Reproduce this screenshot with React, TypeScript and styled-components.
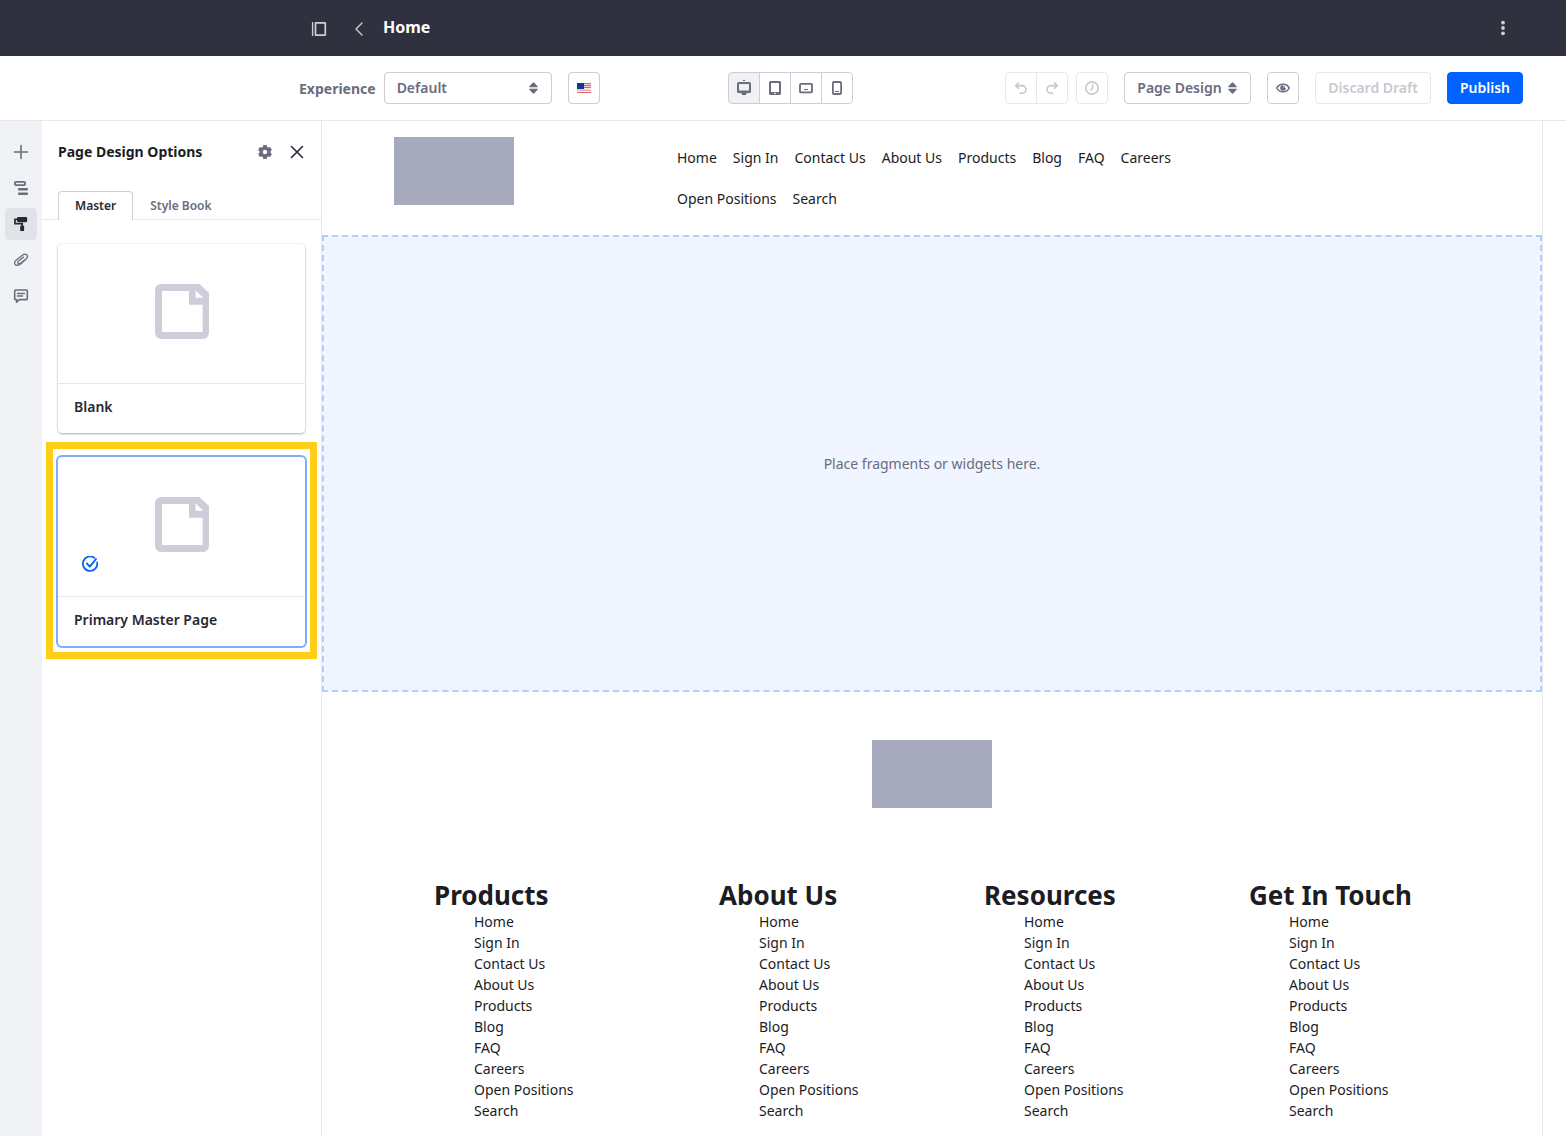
import React from "react";
import styled, { createGlobalStyle, css } from "styled-components";

const color = {
  navy: "#30313f",
  text: "#1c1c24",
  title: "#272833",
  muted: "#6b6c7e",
  border: "#cdced9",
  line: "#e7e7ed",
  rail: "#f1f2f5",
  primary: "#0062ff",
  soft: "#80acff",
  block: "#a7a9bc",
};

const GlobalStyle = createGlobalStyle`
  *, *::before, *::after { box-sizing: border-box; }
  body {
    margin: 0;
    background: #fff;
    color: ${color.text};
    font-family: "Noto Sans", "Liberation Sans", sans-serif;
    font-size: 14px;
    line-height: 21px;
  }
  button, select { font: inherit; color: inherit; }
  h1, h2, ul { margin: 0; padding: 0; }
  ul { list-style: none; }
  a { color: inherit; text-decoration: none; }
  svg { display: block; flex: none; }
`;

const Page = styled.div`
  display: flex;
  flex-direction: column;
  min-height: 100vh;
`;

/* Top bar */

const TopBar = styled.header`
  display: flex;
  align-items: center;
  height: 56px;
  padding: 0 47px 0 303px;
  background: ${color.navy};
  color: #fff;
`;

const TopNav = styled.div`
  display: flex;
  gap: 8px;
  padding-top: 2px;
`;

const BarButton = styled.button`
  display: flex;
  align-items: center;
  justify-content: center;
  width: 32px;
  height: 32px;
  padding: 0;
  border: 0;
  background: none;
  color: ${color.border};
  cursor: pointer;
`;

const PageTitle = styled.h1`
  flex: 1;
  margin-left: 8px;
  padding-bottom: 2px;
  font-size: 16px;
  line-height: 24px;
  font-weight: 700;
`;

/* Toolbar */

const Toolbar = styled.div`
  display: flex;
  align-items: center;
  height: 65px;
  padding: 0 43px 0 299px;
  border-bottom: 1px solid ${color.line};
  color: ${color.muted};
  font-weight: 600;
`;

const ToolGroup = styled.div<{ $push?: boolean }>`
  display: flex;
  align-items: center;
  gap: 16px;
  ${(p) => p.$push && "margin-left: auto;"}
`;

const ExperienceField = styled.div`
  display: flex;
  align-items: center;
  gap: 8px;

  label {
    font-weight: 700;
  }
`;

const SelectBox = styled.div<{ $wide?: boolean }>`
  position: relative;
  width: ${(p) => (p.$wide ? "168px" : "127px")};

  svg {
    position: absolute;
    top: 10px;
    right: 14px;
    pointer-events: none;
  }
`;

const control = css`
  height: 32px;
  border: 1px solid ${color.border};
  border-radius: 4px;
  background: #fff;
  color: ${color.muted};
  font-weight: 600;
  cursor: pointer;
`;

const Select = styled.select`
  ${control}
  display: block;
  width: 100%;
  padding: 0 12px 2px;
  appearance: none;
`;

const ToolButton = styled.button<{ $primary?: boolean }>`
  ${control}
  display: flex;
  align-items: center;
  justify-content: center;
  padding: 0 12px 2px;

  &:disabled {
    border-color: ${color.line};
    color: #c8c8d0;
    cursor: default;
  }

  ${(p) =>
    p.$primary &&
    css`
      border-color: ${color.primary};
      background: ${color.primary};
      color: #fff;
    `}
`;

const IconButton = styled(ToolButton)<{ $active?: boolean }>`
  width: 32px;
  padding: 0;
  ${(p) => p.$active && `background: ${color.rail};`}
`;

const ButtonGroup = styled.div`
  display: flex;

  > button:not(:first-child) {
    margin-left: -1px;
    border-top-left-radius: 0;
    border-bottom-left-radius: 0;
  }
  > button:not(:last-child) {
    border-top-right-radius: 0;
    border-bottom-right-radius: 0;
  }
`;

const DeviceGroup = styled(ButtonGroup)`
  margin-left: 128px;
`;

const HistoryGroup = styled.div`
  display: flex;
  gap: 8px;
`;

/* Work area */

const Workspace = styled.div`
  display: flex;
  flex: 1;
`;

const Rail = styled.nav`
  display: flex;
  flex-direction: column;
  align-items: center;
  gap: 4px;
  flex: none;
  width: 42px;
  padding-top: 15px;
  background: ${color.rail};
`;

const RailButton = styled.button<{ $active?: boolean }>`
  display: flex;
  align-items: center;
  justify-content: center;
  width: 32px;
  height: 32px;
  padding: 0;
  border: 0;
  border-radius: 4px;
  background: ${(p) => (p.$active ? "#e2e3e8" : "none")};
  color: ${(p) => (p.$active ? color.title : color.muted)};
  cursor: pointer;
`;

const Panel = styled.aside`
  flex: none;
  width: 280px;
  border-right: 1px solid ${color.line};
`;

const PanelHeader = styled.div`
  display: flex;
  align-items: center;
  height: 62px;
  padding: 0 8px 0 16px;
`;

const PanelTitle = styled.h2`
  flex: 1;
  padding-bottom: 2px;
  font-size: 14px;
  line-height: 21px;
  font-weight: 700;
`;

const PanelButton = styled(BarButton)<{ $dark?: boolean }>`
  color: ${(p) => (p.$dark ? color.title : color.muted)};
`;

const Tabs = styled.div`
  display: flex;
  height: 37px;
  padding: 8px 16px 0;
  border-bottom: 1px solid ${color.line};
`;

const Tab = styled.button<{ $active?: boolean }>`
  height: 29px;
  padding: 0 16px;
  border: 1px solid ${(p) => (p.$active ? color.border : "transparent")};
  border-bottom: 0;
  border-radius: 4px 4px 0 0;
  background: ${(p) => (p.$active ? "#fff" : "none")};
  color: ${(p) => (p.$active ? color.title : color.muted)};
  font-size: 12px;
  line-height: 18px;
  font-weight: 600;
  cursor: pointer;
`;

const CardList = styled.div`
  display: flex;
  flex-direction: column;
  gap: 24px;
  padding: 24px 16px;
`;

const Card = styled.button<{ $selected?: boolean }>`
  position: relative;
  display: flex;
  flex-direction: column;
  width: 100%;
  padding: 0;
  border: 0;
  border-radius: 4px;
  background: #fff;
  color: ${color.title};
  text-align: left;
  cursor: pointer;
  box-shadow: ${(p) =>
    p.$selected
      ? `0 0 0 2px ${color.soft}`
      : "0 1px 3px -1px rgba(0, 0, 0, 0.6), 0 0 2px rgba(0, 0, 0, 0.14)"};

  ${(p) =>
    p.$selected &&
    css`
      &::after {
        content: "";
        position: absolute;
        inset: -15px -12px -13px -12px;
        border: 7px solid #ffcf17;
        pointer-events: none;
      }
    `}
`;

const CardPreview = styled.span`
  display: flex;
  align-items: center;
  justify-content: center;
  width: 100%;
  height: 140px;
  padding-bottom: 4px;
  border-bottom: 1px solid ${color.line};
  color: ${color.border};
`;

const CardCheck = styled.span`
  position: absolute;
  top: 99px;
  left: 24px;
  color: ${color.primary};
`;

const CardLabel = styled.span`
  padding: 12px 16px 16px;
  font-weight: 600;
`;

/* Canvas */

const Canvas = styled.main`
  flex: 1;
  min-width: 0;
  margin-right: 23px;
  border-right: 1px solid ${color.line};
`;

const SiteHeader = styled.div`
  display: grid;
  grid-template-columns: 283px minmax(0, 560px);
  align-items: start;
  max-width: 1140px;
  margin: 0 auto;
  padding: 16px 32px;
`;

const LogoBlock = styled.div`
  width: 120px;
  height: 68px;
  background: ${color.block};
`;

const SiteNav = styled.ul`
  display: flex;
  flex-wrap: wrap;
  column-gap: 16px;

  a {
    display: block;
    padding: 10px 0;
  }
`;

const DropZone = styled.div`
  display: flex;
  align-items: center;
  justify-content: center;
  height: 457px;
  border: 2px dashed #b3cdff;
  background: #f0f5ff;
  color: ${color.muted};
`;

const SiteFooter = styled.footer`
  display: flex;
  flex-direction: column;
  align-items: center;
  gap: 72px;
  padding-top: 48px;
`;

const FooterColumns = styled.div`
  display: grid;
  grid-template-columns: repeat(4, 1fr);
  width: 100%;
  max-width: 1140px;
`;

const FooterColumn = styled.section<{ $indent: number }>`
  padding-left: ${(p) => p.$indent}px;

  h2 {
    font-size: 26px;
    line-height: 31px;
    font-weight: 700;
  }
  ul {
    padding-left: 40px;
  }
`;

/* Icons */

const stroke = (width: number) => ({
  fill: "none",
  stroke: "currentColor",
  strokeWidth: width,
  strokeLinecap: "round" as const,
  strokeLinejoin: "round" as const,
});

const Icon = ({ children }: { children: React.ReactNode }) => (
  <svg width="16" height="16" viewBox="0 0 16 16" fill="currentColor" aria-hidden="true">
    {children}
  </svg>
);

const CaretDouble = () => (
  <svg width="9" height="12" viewBox="0 0 9 12" fill="currentColor" aria-hidden="true">
    <path d="M4 .4a.7.7 0 0 1 1 0l3.600 3.800c.4.4.1 1-.4 1H.8c-.5 0-.8-.6-.4-1zM4 11.600a.7.7 0 0 0 1 0l3.600-3.800c.4-.4.1-1-.4-1H.8c-.5 0-.8.6-.4 1z" />
  </svg>
);

const PageGlyph = () => (
  <svg width="54" height="55" viewBox="0 0 54 55" fill="currentColor" aria-hidden="true">
    <path
      fillRule="evenodd"
      d="M6 0H44.600L54 9V49a6 6 0 0 1-6 6H6a6 6 0 0 1-6-6V6a6 6 0 0 1 6-6zM7 7V48H47.600V20.700H34V7zM40.600 6.300V13.700H48.300z"
    />
  </svg>
);

const Flag = () => (
  <svg width="14" height="10" viewBox="0 0 14 10" aria-hidden="true">
    <rect width="14" height="10" fill="#f6d3d5" />
    <path d="M0 .5h14M0 2.500h14M0 4.500h14M0 7h14M0 9.500h14" stroke="#e0646b" />
    <path d="M0 6h14M0 8.300h14" stroke="#fff" />
    <rect width="7" height="6" fill="#0a3b9c" />
  </svg>
);

/* Content */

const links = [
  "Home", "Sign In", "Contact Us", "About Us", "Products",
  "Blog", "FAQ", "Careers", "Open Positions", "Search",
];

const footerColumns = [
  { title: "Products", indent: 72 },
  { title: "About Us", indent: 72 },
  { title: "Resources", indent: 52 },
  { title: "Get In Touch", indent: 32 },
];

const LinkItems = () => (
  <>
    {links.map((label) => (
      <li key={label}>
        <a href="#">{label}</a>
      </li>
    ))}
  </>
);

const devices = [
  {
    name: "Desktop",
    icon: (
      <>
        <rect x="7" y="-1" width="2" height="2" />
        <path fillRule="evenodd" d="M2.500 2h11A1.500 1.500 0 0 1 15 3.500V11.500a1.500 1.500 0 0 1-1.500 1.500h-11A1.500 1.500 0 0 1 1 11.500V3.500A1.500 1.500 0 0 1 2.500 2zM3 4V10.500H13V4z" />
        <path d="M4.500 13h7l-1.500 1v1H6v-1z" />
      </>
    ),
  },
  {
    name: "Tablet",
    icon: (
      <path fillRule="evenodd" d="M3.500 1h9A1.500 1.500 0 0 1 14 2.500v11a1.500 1.500 0 0 1-1.500 1.500h-9A1.500 1.500 0 0 1 2 13.500v-11A1.500 1.500 0 0 1 3.500 1zM4 3V12H12V3zM7.200 12.700V14H8.800V12.700z" />
    ),
  },
  {
    name: "Landscape phone",
    icon: (
      <>
        <rect x="2" y="3.800" width="12" height="8.600" rx="1" {...stroke(1.8)} />
        <rect x="6" y="9" width="4" height="1" />
      </>
    ),
  },
  {
    name: "Portrait phone",
    icon: (
      <>
        <rect x="3.900" y="2" width="8.200" height="12" rx="1" {...stroke(1.8)} />
        <rect x="6" y="11" width="4" height="1" />
      </>
    ),
  },
];

const railItems = [
  { name: "Fragments and widgets", icon: <path d="M8 1.500v13M1.500 8h13" {...stroke(1.6)} /> },
  {
    name: "Browser",
    icon: (
      <>
        <rect x="1.900" y="1.900" width="10.200" height="3.200" rx="1" {...stroke(1.800)} />
        <rect x="5" y="8" width="10" height="2.600" rx="1" />
        <rect x="5" y="12.400" width="10" height="2.600" rx="1" />
      </>
    ),
  },
  {
    name: "Page design options",
    active: true,
    icon: (
      <>
        <rect x="4" y="1" width="10.200" height="5.200" rx="1.400" />
        <path d="M4.500 3.300H2V7.600H9.200V10" fill="none" stroke="currentColor" strokeWidth="1.700" />
        <rect x="7.200" y="9.800" width="3.900" height="5.200" rx=".6" />
      </>
    ),
  },
  {
    name: "Contents",
    icon: (
      <path d="M13.200 7 7.600 11.900C5.600 13.600 3 13.700 2 12.300 1 10.900 1.900 9.300 3.300 8.100L9.500 3.200C11 2 13 2 14 3.200 15 4.500 14.300 5.900 13 7L7.500 11.200C6.600 11.900 5.500 11.900 5 11.200 4.400 10.400 4.900 9.600 5.600 9L10.500 5.200" {...stroke(1.3)} />
    ),
  },
  {
    name: "Comments",
    icon: (
      <>
        <path d="M2.500 2h11a.8.8 0 0 1 .8.8v8a.8.8 0 0 1-.8.8H6.200L3.600 14.200V11.600H2.500a.8.8 0 0 1-.8-.8v-8a.8.8 0 0 1 .8-.8z" {...stroke(1.6)} />
        <path d="M4.500 5.500h7M4.500 8h5" {...stroke(1.4)} />
      </>
    ),
  },
];

export default function App() {
  return (
    <Page>
      <GlobalStyle />
      <TopBar>
        <TopNav>
          <BarButton aria-label="Toggle product menu">
            <Icon>
              <path d="M1.600 1v14" stroke="currentColor" strokeWidth="1.400" />
              <rect x="4.500" y="1.800" width="9.800" height="12.400" rx=".4" {...stroke(1.7)} />
            </Icon>
          </BarButton>
          <BarButton aria-label="Back">
            <Icon>
              <path d="M11 2 5 8l6 6" {...stroke(1.4)} />
            </Icon>
          </BarButton>
        </TopNav>
        <PageTitle>Home</PageTitle>
        <BarButton aria-label="Options">
          <Icon>
            <circle cx="8" cy="2.700" r="1.900" />
            <circle cx="8" cy="8" r="1.900" />
            <circle cx="8" cy="13.300" r="1.900" />
          </Icon>
        </BarButton>
      </TopBar>

      <Toolbar>
        <ToolGroup>
          <ExperienceField>
            <label htmlFor="experience">Experience</label>
            <SelectBox $wide>
              <Select id="experience" defaultValue="Default">
                <option>Default</option>
              </Select>
              <CaretDouble />
            </SelectBox>
          </ExperienceField>
          <IconButton aria-label="Language: English">
            <Flag />
          </IconButton>
        </ToolGroup>
        <DeviceGroup>
          {devices.map((device, i) => (
            <IconButton key={device.name} aria-label={device.name} $active={i === 0}>
              <Icon>{device.icon}</Icon>
            </IconButton>
          ))}
        </DeviceGroup>
        <ToolGroup $push>
          <HistoryGroup>
            <ButtonGroup>
              <IconButton disabled aria-label="Undo">
                <Icon>
                  <path d="M5.500 3 2.800 5.700l2.700 2.700M3 5.700h6.300a3.700 3.700 0 0 1 0 7.400H7.500" {...stroke(1.7)} />
                </Icon>
              </IconButton>
              <IconButton disabled aria-label="Redo">
                <Icon>
                  <path d="M10.500 3l2.700 2.700-2.700 2.700M13 5.700H6.700a3.700 3.700 0 0 0 0 7.400h1.800" {...stroke(1.7)} />
                </Icon>
              </IconButton>
            </ButtonGroup>
            <IconButton disabled aria-label="History">
              <Icon>
                <circle cx="8" cy="8" r="6.200" {...stroke(1.7)} />
                <path d="M8.600 4.500V8.200L6.800 10" {...stroke(1.5)} />
              </Icon>
            </IconButton>
          </HistoryGroup>
          <SelectBox>
            <Select aria-label="Edit mode" defaultValue="Page Design">
              <option>Page Design</option>
            </Select>
            <CaretDouble />
          </SelectBox>
          <IconButton aria-label="Preview">
            <Icon>
              <path d="M1.700 8C3 5.500 5.300 4.200 8 4.200S13 5.500 14.300 8C13 10.500 10.700 11.800 8 11.800S3 10.500 1.700 8z" {...stroke(1.5)} />
              <path d="M8 5.200A2.800 2.800 0 1 0 10.800 8H8z" />
              <circle cx="9" cy="7" r="1" />
            </Icon>
          </IconButton>
          <ToolButton disabled>Discard Draft</ToolButton>
          <ToolButton $primary>Publish</ToolButton>
        </ToolGroup>
      </Toolbar>

      <Workspace>
        <Rail aria-label="Editor panels">
          {railItems.map((item) => (
            <RailButton key={item.name} aria-label={item.name} $active={item.active}>
              <Icon>{item.icon}</Icon>
            </RailButton>
          ))}
        </Rail>

        <Panel>
          <PanelHeader>
            <PanelTitle>Page Design Options</PanelTitle>
            <PanelButton aria-label="Configure">
              <Icon>
                <path
                  fillRule="evenodd"
                  d="M6.300 1h3.400l.4 1.900 1.200.7 1.900-.6 1.700 2.900-1.400 1.400v1.400l1.400 1.400-1.700 2.900-1.900-.6-1.200.7L9.700 15H6.300l-.4-1.900-1.200-.7-1.900.6-1.700-2.900 1.400-1.400V7.300L1.100 5.900 2.800 3l1.900.6 1.200-.7zM8 5.800a2.200 2.200 0 1 0 0 4.400 2.200 2.200 0 0 0 0-4.400z"
                />
              </Icon>
            </PanelButton>
            <PanelButton $dark aria-label="Close">
              <Icon>
                <path d="m2.500 2.500 11 11M13.500 2.500l-11 11" {...stroke(1.6)} />
              </Icon>
            </PanelButton>
          </PanelHeader>
          <Tabs role="tablist">
            <Tab role="tab" aria-selected="true" $active>Master</Tab>
            <Tab role="tab" aria-selected="false">Style Book</Tab>
          </Tabs>
          <CardList>
            <Card>
              <CardPreview>
                <PageGlyph />
              </CardPreview>
              <CardLabel>Blank</CardLabel>
            </Card>
            <Card $selected aria-pressed="true">
              <CardPreview>
                <PageGlyph />
              </CardPreview>
              <CardCheck>
                <Icon>
                  <path d="M12.300 1.800A7.200 7.200 0 1 0 15.200 6.500" {...stroke(1.8)} />
                  <path d="m4.800 7.400 3 3.200L14 3" {...stroke(1.9)} />
                </Icon>
              </CardCheck>
              <CardLabel>Primary Master Page</CardLabel>
            </Card>
          </CardList>
        </Panel>

        <Canvas>
          <SiteHeader>
            <LogoBlock />
            <SiteNav>
              <LinkItems />
            </SiteNav>
          </SiteHeader>
          <DropZone>Place fragments or widgets here.</DropZone>
          <SiteFooter>
            <LogoBlock />
            <FooterColumns>
              {footerColumns.map((column) => (
                <FooterColumn key={column.title} $indent={column.indent}>
                  <h2>{column.title}</h2>
                  <ul>
                    <LinkItems />
                  </ul>
                </FooterColumn>
              ))}
            </FooterColumns>
          </SiteFooter>
        </Canvas>
      </Workspace>
    </Page>
  );
}
